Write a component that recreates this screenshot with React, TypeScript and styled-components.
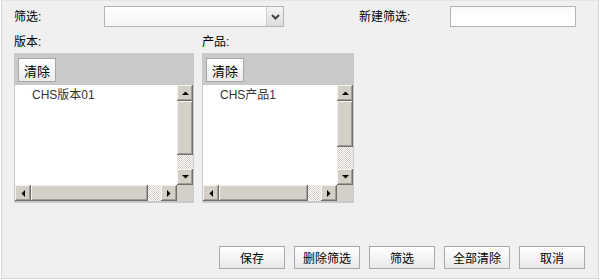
import React from 'react';
import styled, { createGlobalStyle } from 'styled-components';

const GlobalStyle = createGlobalStyle`
	html, body {
		margin: 0;
		padding: 0;
		background: #ffffff;
	}
	body {
		font-family: "Liberation Sans", "Noto Sans CJK SC", sans-serif;
		font-size: 12px;
		color: #000;
	}
`;

const Frame = styled.div`
	box-sizing: border-box;
	width: 598px;
	height: 279px;
	margin-left: 1px;
	border: 1px solid #d8d8d8;
	border-top-color: #dde5ef;
	background: #f0f0f0;
	padding: 5px 13px 9px 12px;
	display: flex;
	flex-direction: column;
`;

const TopRow = styled.div`
	display: flex;
	align-items: center;
	height: 21px;
`;

const Label = styled.span<{ $width?: number; $offset?: number }>`
	display: inline-block;
	width: ${({ $width }) => ($width ? `${$width}px` : 'auto')};
	margin-left: ${({ $offset }) => ($offset ? `${$offset}px` : '0')};
	line-height: 16px;
	white-space: nowrap;
`;

const SelectBox = styled.div`
	box-sizing: border-box;
	width: 180px;
	height: 21px;
	border: 1px solid #b4b4b4;
	background: linear-gradient(#ffffff, #f6f6f6);
	display: flex;
	justify-content: flex-end;
`;

const SelectArrow = styled.div`
	box-sizing: border-box;
	width: 17px;
	height: 100%;
	border-left: 1px solid #d0d0d0;
	background: linear-gradient(#f4f4f4, #dcdcdc);
	display: flex;
	align-items: center;
	justify-content: center;
`;

const TextInput = styled.div`
	box-sizing: border-box;
	width: 126px;
	height: 21px;
	border: 1px solid #b4b4b4;
	background: linear-gradient(#f8f8f8, #ffffff 40%);
`;

const Columns = styled.div`
	display: flex;
	gap: 8px;
	margin-top: 7px;
`;

const Column = styled.div<{ $width: number }>`
	width: ${({ $width }) => `${$width}px`};
	display: flex;
	flex-direction: column;
`;

const ColumnLabel = styled(Label)`
	margin-bottom: 3px;
`;

const Panel = styled.div`
	background: #c9c9c9;
	padding: 0 1px 2px 1px;
`;

const PanelHeader = styled.div`
	height: 32px;
	padding: 5px 4px;
	box-sizing: border-box;
	margin: 0 -1px;
`;

const SmallButton = styled.button`
	box-sizing: border-box;
	height: 24px;
	width: 38px;
	padding: 0;
	border: 1px solid #a6a6a6;
	background: linear-gradient(#ffffff, #ececec);
	font: inherit;
	font-size: 13px;
	color: #000;
`;

const ListBox = styled.div`
	height: 116px;
	background: #fff;
	display: flex;
	flex-direction: column;
`;

const ListMain = styled.div`
	flex: 1;
	display: flex;
	min-height: 0;
`;

const Items = styled.div`
	flex: 1;
	padding: 2px 0 0 17px;
	color: #333;
	line-height: 16px;
`;

const VBar = styled.div`
	width: 16px;
	display: flex;
	flex-direction: column;
`;

const HBarRow = styled.div`
	height: 16px;
	display: flex;
`;

const HBar = styled.div`
	flex: 1;
	display: flex;
`;

const Piece = styled.div<{ $size: number; $vertical?: boolean }>`
	box-sizing: border-box;
	${({ $vertical, $size }) =>
		$vertical ? `height: ${$size}px; width: 16px;` : `width: ${$size}px; height: 16px;`}
	flex: none;
	background: #d4d0c8;
	box-shadow: inset -1px -1px #6f6f6f, inset 1px 1px #f4f2ee, inset -2px -2px #a09c94;
	display: flex;
	align-items: center;
	justify-content: center;
`;

const Track = styled.div`
	flex: 1;
	background-color: #ffffff;
	background-image: conic-gradient(#d4d0c8 25%, #ffffff 0 50%, #d4d0c8 0 75%, #ffffff 0);
	background-size: 2px 2px;
`;

const Corner = styled.div`
	width: 16px;
	background: #d4d0c8;
`;

const Footer = styled.div`
	margin-top: auto;
	display: flex;
	justify-content: flex-end;
	gap: 9px;
`;

const ActionButton = styled.button`
	box-sizing: border-box;
	width: 66px;
	height: 23px;
	padding: 0;
	border: 1px solid #a8a8a8;
	background: linear-gradient(#ffffff, #e9e9e9);
	font: inherit;
	font-size: 12px;
	color: #000;
`;

type Dir = 'up' | 'down' | 'left' | 'right';

const arrowPoints: Record<Dir, string> = {
	up: '0,4 7,4 3.5,0.5',
	down: '0,0 7,0 3.5,3.5',
	left: '4,0 4,7 0.5,3.5',
	right: '0,0 0,7 3.5,3.5',
};

function Arrow({ dir }: { dir: Dir }) {
	const horizontal = dir === 'left' || dir === 'right';
	return (
		<svg width={horizontal ? 4 : 7} height={horizontal ? 7 : 4} viewBox={horizontal ? '0 0 4 7' : '0 0 7 4'}>
			<polygon points={arrowPoints[dir]} fill="#000" />
		</svg>
	);
}

function ScrollList({ item, thumbV, thumbH }: { item: string; thumbV: number; thumbH: number }) {
	return (
		<ListBox>
			<ListMain>
				<Items>{item}</Items>
				<VBar>
					<Piece $vertical $size={16}><Arrow dir="up" /></Piece>
					<Piece $vertical $size={thumbV} />
					<Track />
					<Piece $vertical $size={16}><Arrow dir="down" /></Piece>
				</VBar>
			</ListMain>
			<HBarRow>
				<HBar>
					<Piece $size={16}><Arrow dir="left" /></Piece>
					<Piece $size={thumbH} />
					<Track />
					<Piece $size={16}><Arrow dir="right" /></Piece>
				</HBar>
				<Corner />
			</HBarRow>
		</ListBox>
	);
}

export default function App() {
	return (
		<>
			<GlobalStyle />
			<Frame>
				<TopRow>
					<Label $width={90}>筛选:</Label>
					<SelectBox>
						<SelectArrow>
							<svg width="9" height="6" viewBox="0 0 9 6">
								<path d="M1 1 L4.5 4.5 L8 1" stroke="#404040" strokeWidth="2" fill="none" />
							</svg>
						</SelectArrow>
					</SelectBox>
					<Label $width={91} $offset={75}>新建筛选:</Label>
					<TextInput />
				</TopRow>
				<Columns>
					<Column $width={180}>
						<ColumnLabel>版本:</ColumnLabel>
						<Panel>
							<PanelHeader><SmallButton>清除</SmallButton></PanelHeader>
							<ScrollList item="CHS版本01" thumbV={54} thumbH={117} />
						</Panel>
					</Column>
					<Column $width={152}>
						<ColumnLabel>产品:</ColumnLabel>
						<Panel>
							<PanelHeader><SmallButton>清除</SmallButton></PanelHeader>
							<ScrollList item="CHS产品1" thumbV={46} thumbH={89} />
						</Panel>
					</Column>
				</Columns>
				<Footer>
					<ActionButton>保存</ActionButton>
					<ActionButton>删除筛选</ActionButton>
					<ActionButton>筛选</ActionButton>
					<ActionButton>全部清除</ActionButton>
					<ActionButton>取消</ActionButton>
				</Footer>
			</Frame>
		</>
	);
}
